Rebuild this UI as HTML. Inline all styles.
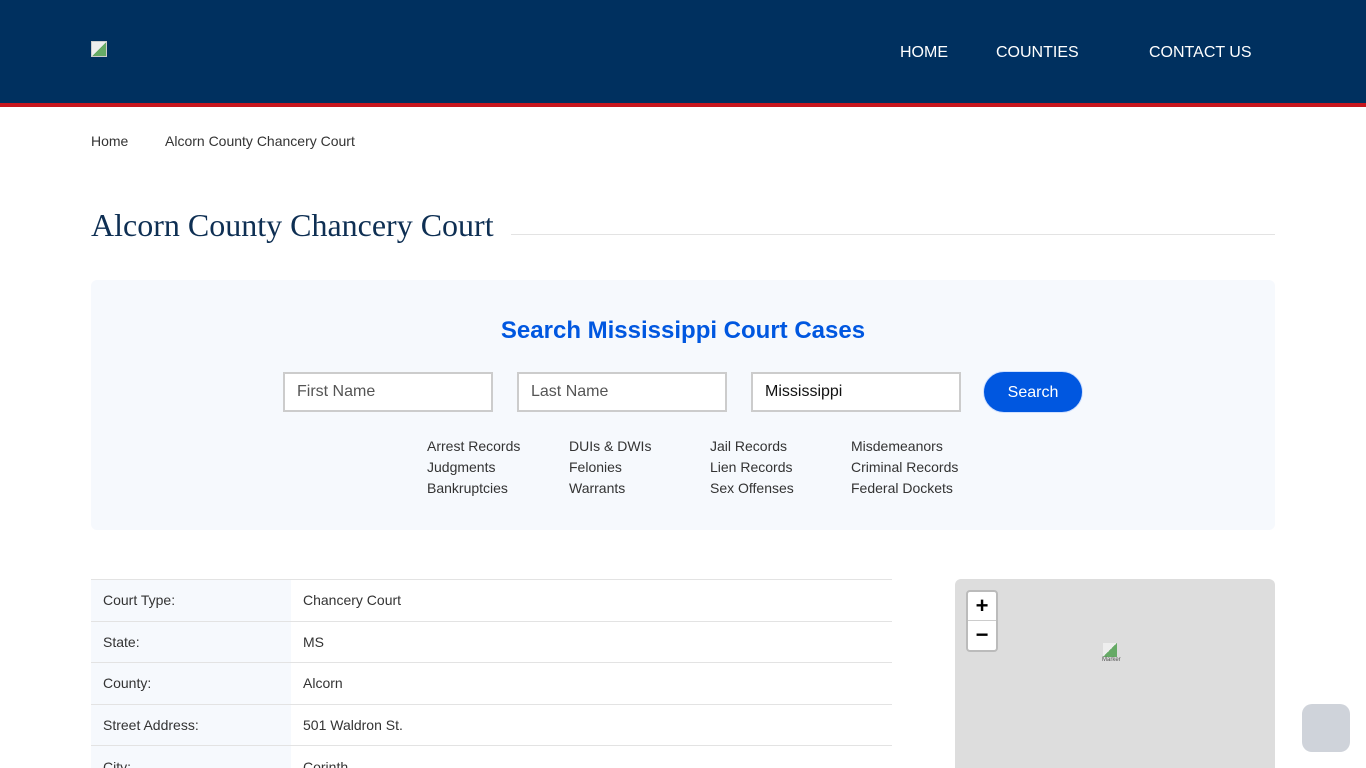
<!DOCTYPE html>
<html style="height:768px;overflow:hidden"><head><meta charset="utf-8"><style>
*{box-sizing:border-box;margin:0;padding:0}
body{width:1366px;height:768px;overflow:hidden;background:#fff;font-family:"Liberation Sans",Arial,sans-serif;color:#333;position:relative}
.hdr{position:absolute;left:0;top:0;width:1366px;background:#00305f;border-bottom:4px solid #c8161d;height:107px}
.logo{position:absolute;left:91px;top:41px;width:16px;height:16px;background:linear-gradient(135deg,#eee 50%,#6a6 50%);border:1px solid #ccc}
.nav a{position:absolute;top:44px;color:#fff;font-size:16px;text-decoration:none}
.t{position:absolute;white-space:nowrap}
h1{position:absolute;left:91px;top:207px;font-family:"Liberation Serif",serif;font-weight:normal;font-size:32px;color:#0e2f53}
.line{position:absolute;left:511px;top:234px;width:764px;height:1px;background:#e3e3e3}
.box{position:absolute;left:91px;top:280px;width:1184px;height:250px;background:#f6f9fd;border-radius:6px}
.inp{position:absolute;top:372px;width:210px;height:40px;border:2px solid #ccc;background:#fff;font-size:16px;padding:9px 12px;color:#555}
.btn{position:absolute;left:983px;top:371px;width:100px;height:42px;border-radius:21px;background:#0057e0;color:#fff;font-size:16px;text-align:center;line-height:42px;border:1px solid #cfe0ff}
.lk{font-size:14px;color:#333;line-height:21px}
table{position:absolute;left:91px;top:579px;width:801px;border-collapse:collapse;font-size:14px}
td{height:41.5px;border-top:1px solid #e3e3e3;padding-left:12px}
td:first-child{width:200px;background:#f6f9fd}
.map{position:absolute;left:955px;top:579px;width:320px;height:200px;background:#ddd;border-radius:6px}
.zc{position:absolute;left:11px;top:11px;width:32px;height:62px;border:2px solid #bbb;border-radius:4px;background:#fff}
.zc div{height:29px;text-align:center;font-size:22px;line-height:28px;color:#000;font-weight:bold}
.fab{position:absolute;left:1302px;top:704px;width:48px;height:48px;border-radius:10px;background:#cfd3da}
</style></head><body>
<div class="hdr"><div class="logo"></div>
<div class="nav"><a style="left:900px">HOME</a><a style="left:996px">COUNTIES</a><a style="left:1149px">CONTACT US</a></div></div>
<div class="t" style="left:91px;top:133px;font-size:14px">Home</div>
<div class="t" style="left:165px;top:133px;font-size:14px">Alcorn County Chancery Court</div>
<h1>Alcorn County Chancery Court</h1><div class="line"></div>
<div class="box"></div>
<div class="t" style="left:0;width:1366px;text-align:center;top:317px;font-size:24px;font-weight:bold;color:#0057e0">Search Mississippi Court Cases</div>
<div class="inp" style="left:283px">First Name</div>
<div class="inp" style="left:517px">Last Name</div>
<div class="inp" style="left:751px;color:#111">Mississippi</div>
<div class="btn">Search</div>
<div class="t lk" style="left:427px;top:436px">Arrest Records<br>Judgments<br>Bankruptcies</div>
<div class="t lk" style="left:569px;top:436px">DUIs &amp; DWIs<br>Felonies<br>Warrants</div>
<div class="t lk" style="left:710px;top:436px">Jail Records<br>Lien Records<br>Sex Offenses</div>
<div class="t lk" style="left:851px;top:436px">Misdemeanors<br>Criminal Records<br>Federal Dockets</div>
<table>
<tr><td>Court Type:</td><td>Chancery Court</td></tr>
<tr><td>State:</td><td>MS</td></tr>
<tr><td>County:</td><td>Alcorn</td></tr>
<tr><td>Street Address:</td><td>501 Waldron St.</td></tr>
<tr><td>City:</td><td>Corinth</td></tr>
</table>
<div class="map"><div class="zc"><div style="border-bottom:1px solid #ccc">+</div><div>−</div></div>
<div style="position:absolute;left:148px;top:64px;width:14px;height:14px;background:linear-gradient(135deg,#eee 50%,#6a6 50%)"></div>
<div class="t" style="left:147px;top:78px;font-size:6px;color:#555">Marker</div></div>
<div class="fab"></div>
</body></html>
